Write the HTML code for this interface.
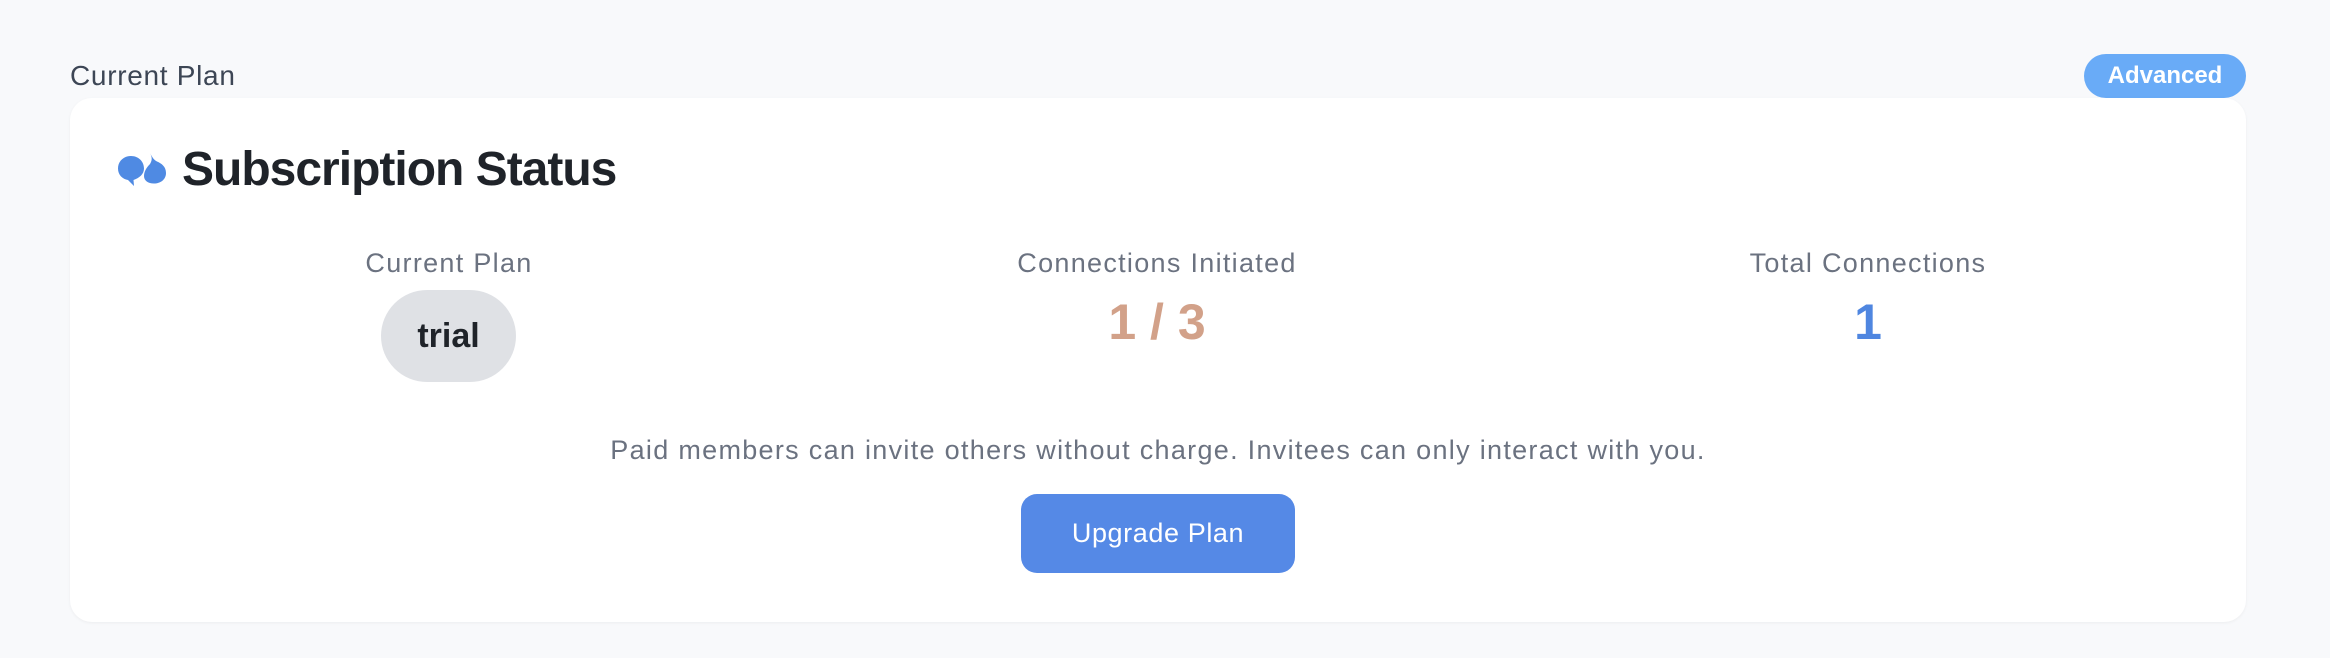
<!DOCTYPE html>
<html><head><meta charset="utf-8"><style>
html,body{margin:0;padding:0}
body{width:2330px;height:658px;background:#f8f9fb;position:relative;font-family:"Liberation Sans",Arial,sans-serif;overflow:hidden}
.a{position:absolute;white-space:nowrap}
.c{transform:translateX(-50%);text-align:center}
</style></head><body>
<div class="a" style="left:70px;top:58px;font-size:28px;line-height:36px;color:#3d4655;letter-spacing:0.7px">Current Plan</div>
<div class="a" style="left:2084px;top:54px;width:162px;height:44px;border-radius:22px;background:#69abf7;color:#fff;font-weight:bold;font-size:24px;line-height:44px;text-align:center">Advanced</div>
<div class="a" style="left:70px;top:98px;width:2176px;height:524px;background:#fff;border-radius:22px;box-shadow:0 1px 3px rgba(0,0,0,0.05)"></div>
<svg class="a" style="left:110px;top:145px" width="70" height="50" viewBox="0 0 70 50">
<path fill="#4f8ae3" d="M21 11C13.5 11 8 16.5 8 23.5C8 30 12.5 34 18 35L24 41L23.5 35C29.5 33 34 29 34 23.5C34 16.5 28.5 11 21 11Z"/>
<path fill="#4f8ae3" d="M40 8C42 12 42.5 15 40 19C36 23 34 27 34 31C34 35.5 38 38.5 44 38.5C50.5 38.5 56 34.5 56 28C56 21.5 51.5 18.5 47 16.5C44 15 42 12 40 8Z"/>
</svg>
<div class="a" style="left:182px;top:140px;font-size:48px;line-height:60px;font-weight:bold;color:#1f2329;letter-spacing:-1px">Subscription Status</div>

<div class="a c" style="left:449px;top:246px;font-size:27px;line-height:34px;color:#6b7280;letter-spacing:1.3px">Current Plan</div>
<div class="a" style="left:381px;top:290px;width:135px;height:92px;border-radius:46px;background:#dfe1e5;color:#1f2329;font-size:34px;font-weight:bold;line-height:92px;text-align:center">trial</div>

<div class="a c" style="left:1157px;top:246px;font-size:27px;line-height:34px;color:#6b7280;letter-spacing:1.3px">Connections Initiated</div>
<div class="a c" style="left:1157px;top:292px;font-size:50px;line-height:60px;font-weight:bold;color:#d2a189">1 / 3</div>

<div class="a c" style="left:1868px;top:246px;font-size:27px;line-height:34px;color:#6b7280;letter-spacing:1.3px">Total Connections</div>
<div class="a c" style="left:1868px;top:292px;font-size:50px;line-height:60px;font-weight:bold;color:#4f86e0">1</div>

<div class="a c" style="left:1158px;top:433px;font-size:27px;line-height:34px;color:#6b7280;letter-spacing:1.3px">Paid members can invite others without charge. Invitees can only interact with you.</div>
<div class="a" style="left:1021px;top:494px;width:274px;height:79px;border-radius:16px;background:#5589e6;color:#fff;font-size:27px;line-height:79px;text-align:center;letter-spacing:0.6px">Upgrade Plan</div>
</body></html>
